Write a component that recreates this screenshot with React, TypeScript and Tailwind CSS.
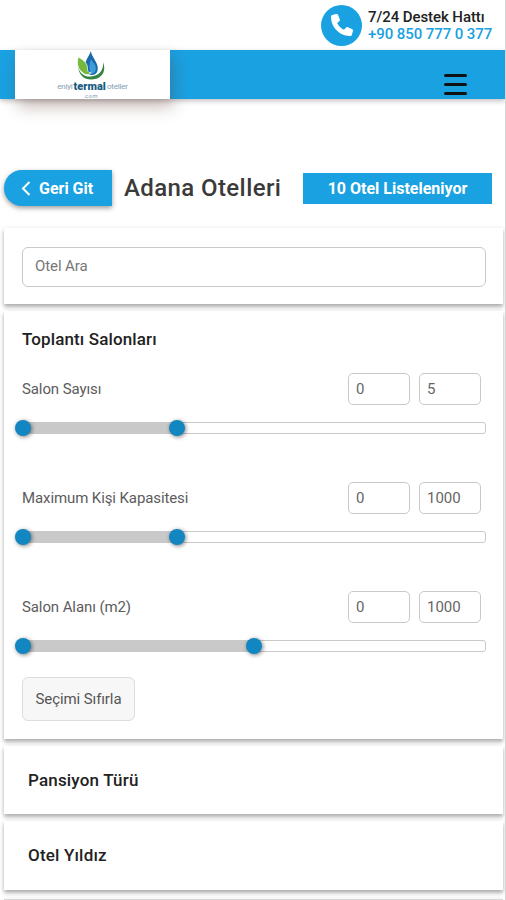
import React from "react";

const cardShadow = "shadow-[0_3px_4px_rgba(0,0,0,0.3),0_0_5px_rgba(0,0,0,0.06)]";

function Knob({ className }: { className: string }) {
  return (
    <span
      className={`absolute top-1/2 h-4 w-4 -translate-x-1/2 -translate-y-1/2 rounded-full bg-[#1186c0] shadow-[1px_1px_4px_rgba(0,0,0,0.5)] ${className}`}
    />
  );
}

function NumberBox({ value }: { value: string }) {
  return (
    <div className="flex h-8 w-[62px] items-center rounded-[5px] border border-[#c9c9c9] bg-white pl-[7px] text-[15px] text-[#666]">
      {value}
    </div>
  );
}

type RangeProps = { label: string; max: string; fill: string; knob: string };

function RangeFilter({ label, max, fill, knob }: RangeProps) {
  return (
    <div className="h-[109px]">
      <div className="flex h-8 items-center justify-between pr-[5px]">
        <span className="text-[15px] tracking-[-0.1px] text-[#5c5c5c]">{label}</span>
        <div className="flex gap-[9px]">
          <NumberBox value="0" />
          <NumberBox value={max} />
        </div>
      </div>
      <div className="relative mt-[17px] h-3 rounded-[3px] border border-[#c9c9c9] bg-white">
        <div className={`-mt-px h-3 rounded-l-[3px] bg-[#c9c9c9] ${fill}`} />
        <Knob className="left-0" />
        <Knob className={knob} />
      </div>
    </div>
  );
}

function Logo() {
  return (
    <div className="relative flex h-[49px] w-[155px] flex-col items-center bg-white shadow-[3px_8px_16px_rgba(90,50,45,0.32)]">
      <svg className="mt-px h-[29px] w-[28px] shrink-0 -translate-x-[2px]" viewBox="0 0 28 29">
        <path d="M13.8 0C12 6 7.5 9.500 8 16C8.300 21 11 24 15 24C19.500 24 21.500 20 20.500 15C19.500 10 15 6 13.800 0Z" fill="#1969ad" />
        <path d="M14 8C12 13 12 18 13.500 23C19 23 20 17 17.500 13C16 11 14.500 10 14 8Z" fill="#3d9bd7" />
        <path d="M1.200 6C7 9 11 13 10.500 18C10.300 21 12 22 14 21.500C12 25 8 24 5 21C0 17 0 12 1.200 6Z" fill="#76b83c" stroke="#fff" strokeWidth=".7" />
        <path d="M1 16C3 23 8 26 14 25.500C22 25 27 19 26 11C30 21 24 28.500 14 28.500C7 28.500 2 24 1 16Z" fill="#348442" />
      </svg>
      <div className="mt-px flex h-[12px] items-center whitespace-nowrap text-[8px] leading-[10px] tracking-[-0.2px] text-[#809db0]">
        <span>eniyi</span>
        <b className="mx-[1px] text-[11px] font-black leading-[10px] tracking-[0px] text-[#195b83]">termal</b>
        <span>oteller</span>
      </div>
      <div className="-mt-px -translate-x-[2px] text-[6px] leading-[7px] tracking-[0.3px] text-[#809db0]">.com</div>
    </div>
  );
}

function SectionCard({ title, className }: { title: string; className: string }) {
  return (
    <section className={`flex items-center bg-white pl-6 text-[17px] font-medium tracking-[0.18px] text-[#222] ${className} ${cardShadow}`}>
      {title}
    </section>
  );
}

export default function App() {
  return (
    <div className="h-[900px] w-[506px] overflow-hidden border-r border-[#d5d5d5] bg-white font-[Roboto,sans-serif]">
      <header>
        <div className="flex h-[50px] items-center justify-end pr-[12px]">
          <div className="flex h-[41px] w-[41px] items-center justify-center rounded-full bg-[#1aa1e1]">
            <svg className="h-[22px] w-[22px]" viewBox="0 0 512 512" fill="#fff">
              <path d="M164.9 24.600c-7.700-18.600-28-28.500-47.400-23.200l-88 24C12.100 30.200 0 46 0 64c0 247.400 200.600 448 448 448c18 0 33.800-12.100 38.600-29.500l24-88c5.300-19.400-4.600-39.700-23.200-47.400l-96-40c-16.300-6.800-35.200-2.100-46.300 11.600L304.700 368C234.300 334.700 177.300 277.700 144 207.300L193.300 167c13.700-11.200 18.400-30 11.600-46.300l-40-96z" />
            </svg>
          </div>
          <div className="ml-[6px] mt-[2px] w-[125px] whitespace-nowrap text-[15px] font-medium leading-[17px]">
            <div className="tracking-[-0.08px] text-[#222]">7/24 Destek Hattı</div>
            <div className="tracking-[-0.08px] text-[#1aa1e1]">+90 850 777 0 377</div>
          </div>
        </div>
        <nav className="flex h-[49px] justify-between bg-[#1aa1e1] pl-[15px] pr-[38px] shadow-[0_2px_5px_rgba(0,0,0,0.25)]">
          <Logo />
          <div className="mt-[24px] flex h-[21px] w-[23px] flex-col justify-between">
            <i className="h-[3px] rounded-sm bg-[#111]" />
            <i className="h-[3px] rounded-sm bg-[#111]" />
            <i className="h-[3px] rounded-sm bg-[#111]" />
          </div>
        </nav>
      </header>

      <div className="mt-[71px] flex h-[36px] items-center pl-1">
        <button className="flex h-9 w-[108px] items-center whitespace-nowrap rounded-l-full bg-[#1aa1e1] pl-[17px] pt-px text-[16px] font-bold text-white shadow-[0_2px_5px_rgba(0,0,0,0.4)]">
          <svg className="mr-2 h-[15px] w-[10px]" viewBox="0 0 10 15" fill="none" stroke="#fff" strokeWidth="2">
            <path d="M8.500 1 2 7.500 8.500 14" />
          </svg>
          Geri Git
        </button>
        <h1 className="ml-3 w-[179px] whitespace-nowrap text-[24px] font-medium tracking-[0.4px] text-[#3a3a3a]">Adana Otelleri</h1>
        <div className="flex h-[31px] w-[189px] items-center justify-center bg-[#1aa1e1] pt-px text-[16px] font-bold text-white">10 Otel Listeleniyor</div>
      </div>

      <main className="ml-1 mt-[22px] flex w-[499px] flex-col gap-[7px]">
        <section className={`h-[76px] bg-white px-[18px] pt-[19px] ${cardShadow}`}>
          <div className="flex h-[40px] w-[464px] items-center rounded-[6px] border border-[#c9c9c9] pb-px pl-[12px] text-[15px] tracking-[-0.1px] text-[#777]">Otel Ara</div>
        </section>
        <section className={`h-[428px] bg-white pl-[18px] pr-[17px] pt-[17px] ${cardShadow}`}>
          <h2 className="text-[17px] font-medium leading-[23px] tracking-[0.12px] text-[#222]">Toplantı Salonları</h2>
          <div className="mt-[22px]">
            <RangeFilter label="Salon Sayısı" max="5" fill="w-1/3" knob="left-1/3" />
            <RangeFilter label="Maximum Kişi Kapasitesi" max="1000" fill="w-1/3" knob="left-1/3" />
            <RangeFilter label="Salon Alanı (m2)" max="1000" fill="w-1/2" knob="left-1/2" />
          </div>
          <button className="-mt-[23px] block h-[44px] w-[113px] rounded-[6px] border border-[#ddd] bg-[#f7f7f7] text-[15px] tracking-[-0.1px] text-[#555]">Seçimi Sıfırla</button>
        </section>
        <SectionCard title="Pansiyon Türü" className="h-[68px] pt-px" />
        <SectionCard title="Otel Yıldız" className="h-[69px]" />
        <div className={`mt-[2px] h-10 border-t border-[#d8d8d8] bg-white ${cardShadow}`} />
      </main>
    </div>
  );
}
